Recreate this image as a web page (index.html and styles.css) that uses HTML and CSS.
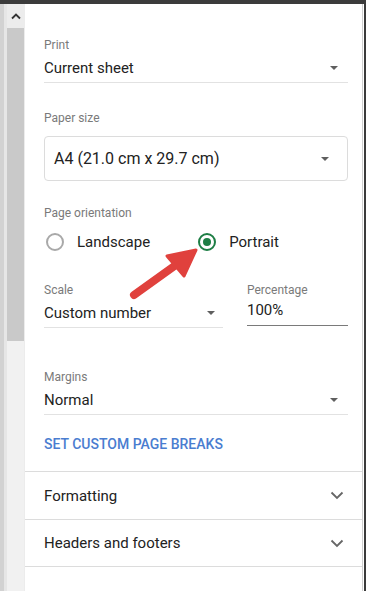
FILE: index.html
```html
<!DOCTYPE html>
<html>
<head>
<meta charset="utf-8">
<link rel="stylesheet" href="styles.css">
</head>
<body>
<div class="app">
  <div class="edge"></div>
  <div class="scrollbar">
    <div class="sb-btn">
      <svg width="12" height="8" viewBox="0 0 12 8"><path d="M2 6.5 L6 2.5 L10 6.5" fill="none" stroke="#333" stroke-width="1.8"/></svg>
    </div>
    <div class="sb-thumb"></div>
  </div>
  <div class="panel">
    <div class="settings">
      <div class="field">
        <div class="label">Print</div>
        <div class="select line">
          <span class="value">Current sheet</span>
          <span class="caret"></span>
        </div>
      </div>

      <div class="field paper">
        <div class="label">Paper size</div>
        <div class="select box">
          <span class="value big">A4 (21.0 cm x 29.7 cm)</span>
          <span class="caret"></span>
        </div>
      </div>

      <div class="field orient">
        <div class="label">Page orientation</div>
        <div class="radios">
          <div class="radio"><span class="circle"></span><span class="rtext">Landscape</span></div>
          <div class="radio portrait"><span class="circle on"></span><span class="rtext">Portrait</span></div>
        </div>
      </div>

      <div class="scale-row">
        <div class="field scale">
          <div class="label">Scale</div>
          <div class="select line">
            <span class="value">Custom number</span>
            <span class="caret"></span>
          </div>
        </div>
        <div class="field pct">
          <div class="label">Percentage</div>
          <div class="input">100%</div>
        </div>
      </div>

      <div class="field margins">
        <div class="label">Margins</div>
        <div class="select line">
          <span class="value">Normal</span>
          <span class="caret"></span>
        </div>
      </div>

      <div class="link">SET CUSTOM PAGE BREAKS</div>
    </div>

    <div class="section">
      <span>Formatting</span>
      <svg width="14" height="9" viewBox="0 0 14 9"><path d="M1.5 1.5 L7 7 L12.5 1.5" fill="none" stroke="#666" stroke-width="1.8"/></svg>
    </div>
    <div class="section">
      <span>Headers and footers</span>
      <svg width="14" height="9" viewBox="0 0 14 9"><path d="M1.5 1.5 L7 7 L12.5 1.5" fill="none" stroke="#666" stroke-width="1.8"/></svg>
    </div>
  </div>
  <div class="edge-right"></div>

  <svg class="annot" width="366" height="591" viewBox="0 0 366 591">
    <path d="M134 295 L180 262" stroke="#e0413d" stroke-width="8" stroke-linecap="round" fill="none"/>
    <polygon points="196,250 167,256 184,276" fill="#e0413d" stroke="#e0413d" stroke-width="3" stroke-linejoin="round"/>
  </svg>
</div>
</body>
</html>
```

FILE: styles.css
```css
* { box-sizing: border-box; }
html, body { margin: 0; padding: 0; }
body {
  width: 366px;
  height: 591px;
  overflow: hidden;
  font-family: Roboto, "Liberation Sans", Arial, sans-serif;
  background: #3b3b3b;
}
.app {
  position: relative;
  display: flex;
  height: 591px;
  padding-top: 4px;
  background: #3b3b3b;
}
.edge {
  width: 4px;
  background: #d2d2d2;
}
.scrollbar {
  width: 20px;
  background: #f1f1f1;
  border-left: 3px solid #e6e6e6;
  display: flex;
  flex-direction: column;
}
.sb-btn {
  height: 24px;
  display: flex;
  align-items: center;
  justify-content: center;
  background: #ececec;
}
.sb-thumb {
  height: 313px;
  background: #c9c9c9;
}
.panel {
  flex: 1;
  background: #fff;
  border-left: 1px solid #ececec;
  border-right: 1px solid #cfcfcf;
  display: flex;
  flex-direction: column;
}
.edge-right {
  width: 3px;
  background: #3b3b3b;
  border-left: 1px solid #fff;
}
.settings {
  padding: 33px 14px 0 19px;
  display: flex;
  flex-direction: column;
}
.field { display: flex; flex-direction: column; }
.label {
  font-size: 12px;
  line-height: 16px;
  color: #7a7a7a;
}
.select {
  display: flex;
  align-items: center;
  justify-content: space-between;
}
.select.line {
  margin-top: 5px;
  height: 25px;
  padding-bottom: 4px;
  border-bottom: 1px solid #e2e2e2;
  padding-right: 10px;
}
.value {
  font-size: 15px;
  line-height: 20px;
  color: #222;
}
.value.big { font-size: 16px; }
.caret {
  width: 0;
  height: 0;
  border-left: 4.5px solid transparent;
  border-right: 4.5px solid transparent;
  border-top: 4.5px solid #5f5f5f;
}
.paper { margin-top: 27px; }
.select.box {
  margin-top: 10px;
  height: 45px;
  border: 1px solid #dcdcdc;
  border-radius: 4px;
  padding: 0 18px 0 9px;
}
.orient { margin-top: 24px; }
.radios {
  display: flex;
  align-items: center;
  height: 28px;
  margin-top: 7px;
}
.radio {
  display: flex;
  align-items: center;
  gap: 13px;
}
.radio.portrait { margin-left: 46px; }
.circle {
  width: 18px;
  height: 18px;
  border-radius: 50%;
  border: 2px solid #a9a9a9;
  margin-left: 2px;
  display: flex;
  align-items: center;
  justify-content: center;
}
.circle.on { border-color: #1e7e45; }
.circle.on::after {
  content: "";
  width: 8px;
  height: 8px;
  border-radius: 50%;
  background: #1e7e45;
}
.rtext {
  font-size: 15px;
  line-height: 20px;
  color: #222;
}
.scale-row {
  display: flex;
  margin-top: 26px;
  gap: 24px;
}
.scale { width: 179px; }
.scale .select.line { padding-right: 8px; }
.pct { flex: 1; }
.input {
  margin-top: 2px;
  height: 26px;
  font-size: 15px;
  line-height: 20px;
  color: #222;
  border-bottom: 1px solid #7a7a7a;
}
.margins { margin-top: 41px; }
.link {
  margin-top: 19px;
  font-size: 14px;
  line-height: 20px;
  font-weight: 500;
  color: #4a7dd0;
  height: 37px;
}
.section {
  height: 48px;
  border-top: 1px solid #dcdcdc;
  display: flex;
  align-items: center;
  justify-content: space-between;
  padding: 0 18px 0 19px;
  font-size: 15px;
  color: #222;
}
.section:last-of-type { border-bottom: 1px solid #dcdcdc; }
.annot {
  position: absolute;
  left: 0;
  top: 0;
  pointer-events: none;
}
```
